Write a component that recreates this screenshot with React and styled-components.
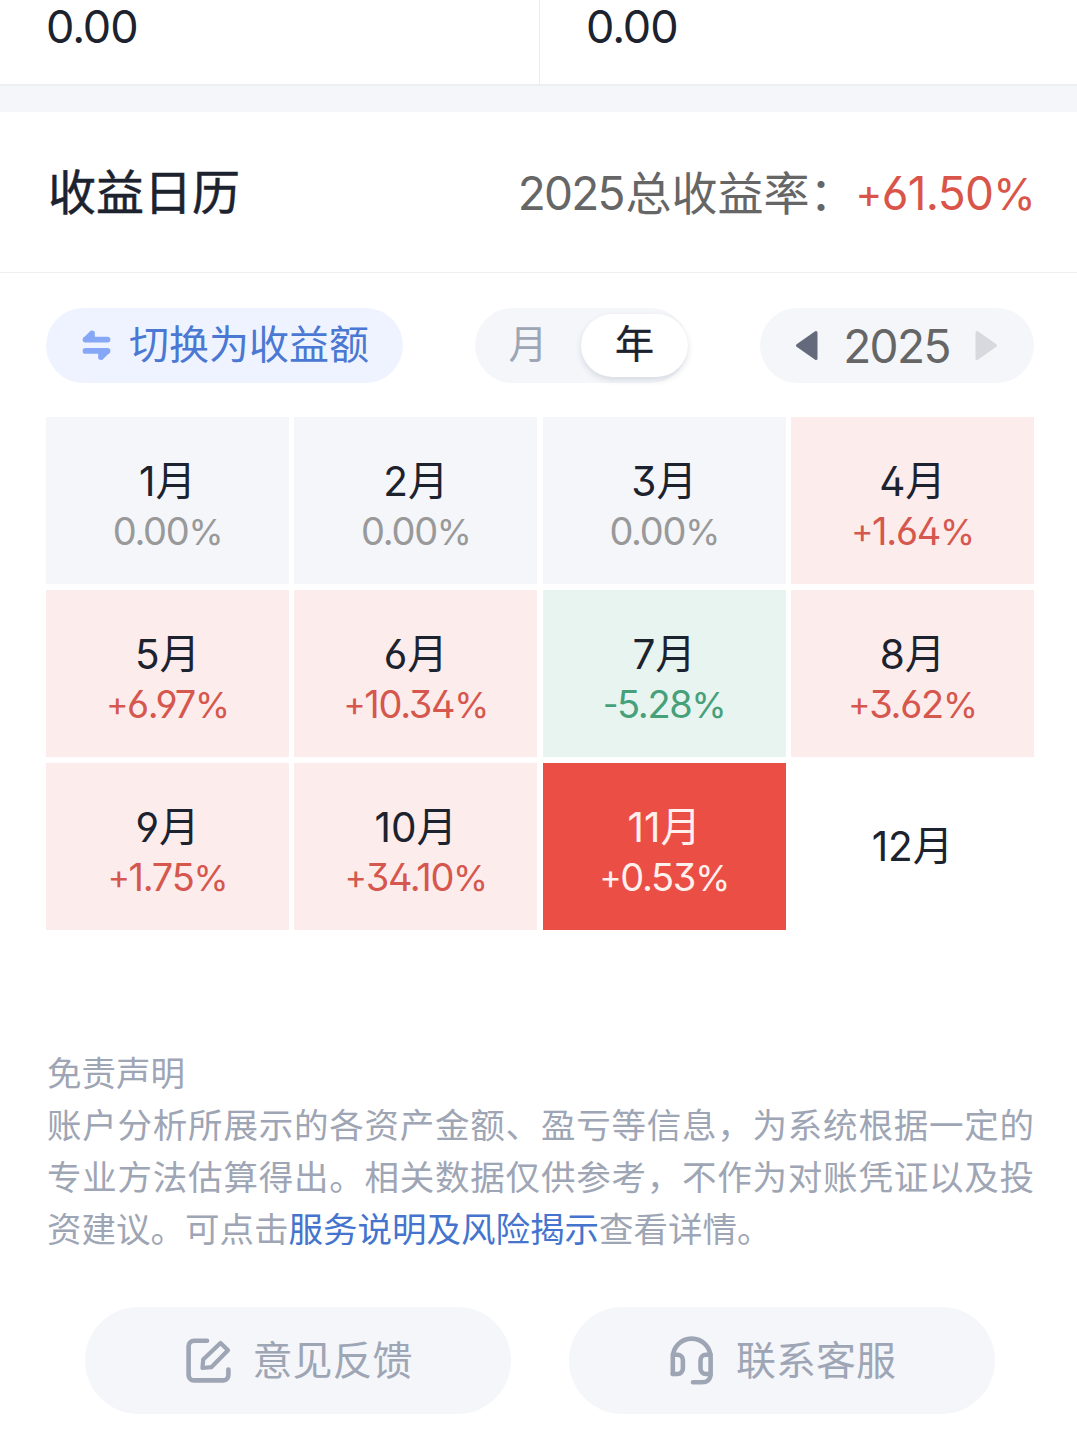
import React from "react";
import styled, { createGlobalStyle } from "styled-components";

const Global = createGlobalStyle`
  * { box-sizing: border-box; }
  body {
    margin: 0;
    background: #fff;
    font-family: Inter, "Noto Sans CJK SC", sans-serif;
    color: #1c222e;
  }
  button { font: inherit; border: 0; padding: 0; margin: 0; background: none; }
`;

const Page = styled.main`
  width: 1077px;
  height: 1454px;
  overflow: hidden;
  background: #fff;
`;

const Num = styled.span`
  font-feature-settings: "ss01" 1, "cv09" 1;
  letter-spacing: ${(p) => p.$track || 0}px;
`;

const Sign = styled.span`
  font-size: 0.88em;
  line-height: 1;
  vertical-align: 0.05em;
`;

const Percent = styled.span`
  font-size: 0.94em;
  line-height: 1;
`;

const Summary = styled.section`
  display: flex;
  height: 86px;
  border-bottom: 2px solid #eeeff0;
`;

const SummaryCell = styled.div`
  width: ${(p) => p.$width}px;
  padding-left: 46px;
  border-right: ${(p) => (p.$divided ? "1px solid #ececee" : "0")};
  font-size: 45px;
  line-height: 53px;
`;

const Band = styled.div`
  height: 26px;
  background: #f4f6fa;
`;

const Header = styled.header`
  display: flex;
  justify-content: space-between;
  height: 161px;
  padding: 48px 42px 0 48px;
  border-bottom: 1px solid #eeeeee;
  line-height: 66px;
`;

const Title = styled.h1`
  margin: 0;
  font-size: 48px;
  font-weight: 400;
  -webkit-text-stroke: 0.5px currentColor;
`;

const Total = styled.div`
  display: flex;
  font-size: 46px;
  color: #666666;
`;

const TotalYear = styled(Num)`
  margin-right: 2px;
`;

const TotalRate = styled.strong`
  font-weight: 400;
  color: #d9554a;
`;

const Toolbar = styled.div`
  display: flex;
  justify-content: space-between;
  padding: 35px 43px 0 46px;
`;

const SwitchButton = styled.button`
  display: flex;
  align-items: center;
  width: 357px;
  height: 75px;
  padding-left: 36px;
  gap: 18px;
  border-radius: 38px;
  background: #eff3ff;
  color: #4a78d2;
  font-size: 40px;
  line-height: 73px;
`;

const SwitchLabel = styled.span`
  height: 75px;
`;

const Segmented = styled.div`
  display: flex;
  align-items: center;
  width: 213px;
  height: 75px;
  border-radius: 38px;
  background: #f4f6fa;
`;

const Segment = styled.button`
  width: ${(p) => (p.$active ? 107 : 106)}px;
  height: 63px;
  padding-bottom: 3px;
  border-radius: 32px;
  font-size: 39px;
  line-height: 60px;
  -webkit-text-stroke: ${(p) => (p.$active ? "0.4px currentColor" : "0")};
  color: ${(p) => (p.$active ? "#1c222e" : "#9ea5b4")};
  background: ${(p) => (p.$active ? "#fff" : "transparent")};
  box-shadow: ${(p) => (p.$active ? "0 3px 6px rgba(40, 50, 80, 0.14)" : "none")};
`;

const YearPicker = styled.div`
  display: flex;
  align-items: center;
  justify-content: space-between;
  width: 274px;
  height: 75px;
  padding: 0 36px 0 35px;
  border-radius: 38px;
  background: #f4f6fa;
  font-size: 46px;
  color: #666666;
`;

const ArrowButton = styled.button`
  display: flex;
  color: ${(p) => (p.$muted ? "#d7d9de" : "#646a7b")};
`;

const Calendar = styled.section`
  display: grid;
  grid-template-columns: repeat(4, 243px);
  grid-auto-rows: 167px;
  column-gap: 5.33px;
  row-gap: 6px;
  padding: 34px 43px 0 46px;
`;

const tones = {
  flat: { bg: "#f4f6fa", text: "#1c222e", rate: "#999999" },
  up: { bg: "#fcecec", text: "#1c222e", rate: "#d5574d" },
  down: { bg: "#e8f4f0", text: "#1c222e", rate: "#46a07a" },
  current: { bg: "#ea4e44", text: "#fff0ee", rate: "#fff0ee" },
  empty: { bg: "#ffffff", text: "#1c222e", rate: "#999999" },
};

const MonthCell = styled.div`
  display: flex;
  flex-direction: column;
  align-items: center;
  justify-content: center;
  padding-top: ${(p) => (p.$tone === "empty" ? 0 : 11)}px;
  background: ${(p) => tones[p.$tone].bg};
  color: ${(p) => tones[p.$tone].text};
`;

const MonthName = styled.div`
  height: 51px;
  font-size: 40.5px;
  line-height: 51px;
`;

const MonthRate = styled.div`
  height: 49px;
  font-size: 38px;
  line-height: 49px;
  color: ${(p) => tones[p.$tone].rate};
`;

const Disclaimer = styled.section`
  padding: 118px 43px 0 47px;
  font-size: 34.5px;
  line-height: 52px;
  color: #9ea5b4;
`;

const Paragraph = styled.p`
  margin: 0;
  text-align: justify;
`;

const DocLink = styled.a`
  color: #4474cd;
`;

const Actions = styled.footer`
  display: flex;
  gap: 58px;
  padding: 51px 82px 0 85px;
`;

const ActionButton = styled.button`
  display: flex;
  align-items: center;
  justify-content: center;
  width: 426px;
  height: 107px;
  padding-left: 2px;
  gap: ${(p) => p.$gap}px;
  border-radius: 54px;
  background: #f4f6fa;
  color: #9ea5b4;
  font-size: 40px;
  line-height: 107px;
`;

const SwapIcon = () => (
  <svg width="29" height="32" viewBox="0 0 28 32" fill="#86a7f5" stroke="#86a7f5" strokeLinecap="round" strokeLinejoin="round">
    <path d="M3 9.6H25M3 20.9H25" strokeWidth="5.8" />
    <path d="M2.5 8.2 9 1.8 11 2.3V9ZM25.5 22.4 19 28.8 17 28.3V22Z" strokeWidth="2.6" />
  </svg>
);

const Triangle = ({ right }) => (
  <svg width="23" height="32" viewBox="0 0 23 32" fill="currentColor" stroke="currentColor" strokeWidth="3" strokeLinejoin="round">
    <path d={right ? "M2 2.5V28.5L20.5 15.5Z" : "M21 2.5V28.5L2.5 15.5Z"} />
  </svg>
);

const EditIcon = () => (
  <svg width="46" height="46" viewBox="0 0 46 46" fill="none" stroke="currentColor" strokeWidth="4.6" strokeLinecap="round">
    <path d="M21 2.8H8A5.4 5.4 0 0 0 2.6 8.2V37A5.4 5.4 0 0 0 8 42.4H37A5.4 5.4 0 0 0 42.4 37V31.5" />
    <path d="M34.5 5 42 12.3 25.3 29.2 16.5 30 17.2 21.5Z" strokeLinejoin="round" strokeWidth="4.2" />
  </svg>
);

const HeadsetIcon = () => (
  <svg width="44" height="50" viewBox="0 0 44 50" fill="none" stroke="currentColor" strokeWidth="4.6" strokeLinecap="round" strokeLinejoin="round">
    <path d="M2.8 38V21.5A18.9 18.9 0 0 1 40.6 21.5V38C40.6 43.5 37 46.3 32 46.3H23" />
    <path d="M2.8 18.8H7.5A5.4 5.4 0 0 1 12.9 24.2V32.6A5.4 5.4 0 0 1 7.5 38H2.8" />
    <path d="M40.6 18.8H35.9A5.4 5.4 0 0 0 30.5 24.2V32.6A5.4 5.4 0 0 0 35.9 38H40.6" />
  </svg>
);

const Rate = ({ sign, value, track }) => (
  <Num $track={track}>
    {sign && <Sign>{sign}</Sign>}
    {value}
    <Percent>%</Percent>
  </Num>
);

const months = [
  { n: 1, rate: "0.00", tone: "flat" },
  { n: 2, rate: "0.00", tone: "flat" },
  { n: 3, rate: "0.00", tone: "flat" },
  { n: 4, sign: "+", rate: "1.64", tone: "up" },
  { n: 5, sign: "+", rate: "6.97", tone: "up" },
  { n: 6, sign: "+", rate: "10.34", tone: "up" },
  { n: 7, sign: "-", rate: "5.28", tone: "down" },
  { n: 8, sign: "+", rate: "3.62", tone: "up" },
  { n: 9, sign: "+", rate: "1.75", tone: "up" },
  { n: 10, sign: "+", rate: "34.10", tone: "up" },
  { n: 11, sign: "+", rate: "0.53", tone: "current" },
  { n: 12, rate: null, tone: "empty" },
];

export default function App() {
  return (
    <Page>
      <Global />
      <Summary>
        <SummaryCell $width={540} $divided><Num $track={-1.1}>0.00</Num></SummaryCell>
        <SummaryCell $width={537}><Num $track={-1.1}>0.00</Num></SummaryCell>
      </Summary>
      <Band />
      <Header>
        <Title>收益日历</Title>
        <Total>
          <span><TotalYear $track={-1.8}>2025</TotalYear>总收益率：</span>
          <TotalRate><Rate sign="+" value="61.50" track={-0.7} /></TotalRate>
        </Total>
      </Header>
      <Toolbar>
        <SwitchButton><SwapIcon /><SwitchLabel>切换为收益额</SwitchLabel></SwitchButton>
        <Segmented>
          <Segment>月</Segment>
          <Segment $active>年</Segment>
        </Segmented>
        <YearPicker>
          <ArrowButton aria-label="prev"><Triangle /></ArrowButton>
          <Num $track={-1.6}>2025</Num>
          <ArrowButton $muted aria-label="next"><Triangle right /></ArrowButton>
        </YearPicker>
      </Toolbar>
      <Calendar>
        {months.map((m) => (
          <MonthCell key={m.n} $tone={m.tone}>
            <MonthName><Num>{m.n}</Num>月</MonthName>
            {m.rate && (
              <MonthRate $tone={m.tone}>
                <Rate sign={m.sign} value={m.rate} track={-1.3} />
              </MonthRate>
            )}
          </MonthCell>
        ))}
      </Calendar>
      <Disclaimer>
        <Paragraph>免责声明</Paragraph>
        <Paragraph>
          账户分析所展示的各资产金额、盈亏等信息，为系统根据一定的专业方法估算得出。相关数据仅供参考，不作为对账凭证以及投资建议。可点击<DocLink>服务说明及风险揭示</DocLink>查看详情。
        </Paragraph>
      </Disclaimer>
      <Actions>
        <ActionButton $gap={21}><EditIcon />意见反馈</ActionButton>
        <ActionButton $gap={22}><HeadsetIcon />联系客服</ActionButton>
      </Actions>
    </Page>
  );
}
